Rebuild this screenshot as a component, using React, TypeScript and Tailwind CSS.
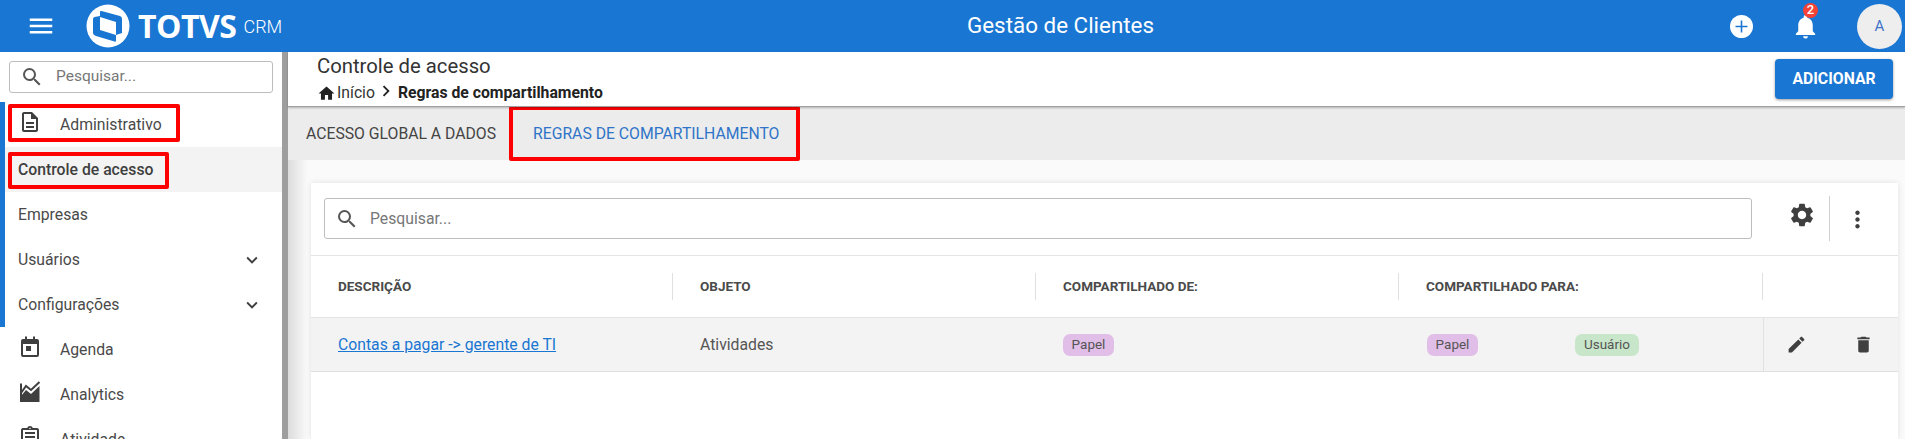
import {
  MdDelete,
  MdEdit,
  MdExpandMore,
  MdHome,
  MdMenu,
  MdMoreVert,
  MdNotifications,
  MdOutlineAssignment,
  MdOutlineDescription,
  MdSearch,
  MdSettings,
  MdChevronRight,
} from "react-icons/md";

const roboto = "font-['Roboto',sans-serif]";

/* ── Logo ─────────────────────────────────────────────────────── */

function TotvsMark() {
  return (
    <svg width="44" height="44" viewBox="0 0 44 44" className="shrink-0">
      <circle cx="22" cy="22" r="21.5" fill="#fff" />
      <path d="M14 13V8Q14 6.5 15.5 7L34 12Q36 12.600 36 15V29L30 31V18Z" fill="#1976d2" />
      <path d="M7 15Q7 13.500 8.500 13L14 12V26L30 31V36.500Q30 38 28.500 37.600L10 32Q7 31 7 29Z" fill="#1976d2" />
    </svg>
  );
}

/* ── Sidebar icons not in the icon set ───────────────────────── */

function AgendaIcon() {
  return (
    <svg width="24" height="24" viewBox="0 0 24 24" fill="currentColor">
      <path d="M7 1.500h2V4h6V1.500h2V4h2a2 2 0 0 1 2 2v14a2 2 0 0 1-2 2H5a2 2 0 0 1-2-2V6a2 2 0 0 1 2-2h2zM5 9v11h14V9z" />
      <rect x="8" y="11" width="5" height="5" />
    </svg>
  );
}

function AnalyticsIcon() {
  return (
    <svg width="24" height="24" viewBox="0 0 24 24" fill="currentColor">
      <path d="M3 22V16l5-6 5 4 8.500-8V22z" />
      <path d="M3 3.500V22M3 13l5-7 5 4 8.500-8" fill="none" stroke="currentColor" strokeWidth="2" />
    </svg>
  );
}

/* ── Sidebar ──────────────────────────────────────────────────── */

function SideIconRow({ icon, label }: { icon: React.ReactNode; label: string }) {
  return (
    <div className="flex h-[45px] items-center pl-[13px] text-[15.750px] text-[#4a4a4a]">
      <span className="flex w-[42px] -translate-y-[3px] text-[#3f3f3f]">{icon}</span>
      {label}
    </div>
  );
}

function SideTextRow({ label, active, caret }: { label: string; active?: boolean; caret?: boolean }) {
  return (
    <div
      className={
        active
          ? "flex h-[45px] items-center bg-[#f3f3f3] pl-[13px] text-[15.750px] font-medium text-[#3f3f3f]"
          : "flex h-[45px] items-center justify-between pl-[13px] pr-[19px] text-[15.750px] text-[#4a4a4a]"
      }
    >
      {label}
      {caret && <MdExpandMore size={22} className="text-[#3f3f3f]" />}
    </div>
  );
}

function Sidebar() {
  return (
    <aside className="w-[282px] shrink-0 bg-white">
      <div className="px-[9px] pt-[9px]">
        <div className="flex h-[32px] items-center rounded-[3px] border border-[#bdbdbd] pl-[10px] text-[15.500px] text-[#777]">
          <MdSearch size={24} className="mr-[12px] text-[#555]" />
          Pesquisar...
        </div>
      </div>
      <div className="mt-[9px] border-l-[5px] border-[#1976d2]">
        <SideIconRow icon={<MdOutlineDescription size={24} />} label="Administrativo" />
        <SideTextRow label="Controle de acesso" active />
        <SideTextRow label="Empresas" />
        <SideTextRow label="Usuários" caret />
        <SideTextRow label="Configurações" caret />
      </div>
      <div className="pl-[5px]">
        <SideIconRow icon={<AgendaIcon />} label="Agenda" />
        <SideIconRow icon={<AnalyticsIcon />} label="Analytics" />
        <SideIconRow icon={<MdOutlineAssignment size={24} />} label="Atividade" />
      </div>
    </aside>
  );
}

/* ── Table ────────────────────────────────────────────────────── */

const columns = "grid grid-cols-[362px_363px_363px_364px_1fr]";
const headers = ["DESCRIÇÃO", "OBJETO", "COMPARTILHADO DE:", "COMPARTILHADO PARA:", ""];

function Pill({ label, tone }: { label: string; tone: "purple" | "green" }) {
  return (
    <span
      className={
        tone === "purple"
          ? "flex h-[22px] w-[51px] items-center justify-center rounded-[7px] bg-[#e1bee7] text-[13.500px] text-[#555]"
          : "flex h-[22px] w-[64px] items-center justify-center rounded-[7px] bg-[#c8e6c9] text-[13.500px] text-[#555]"
      }
    >
      {label}
    </span>
  );
}

function RulesTable() {
  return (
    <div>
      <div className={`${columns} h-[63px] items-center border-y border-[#e4e4e4]`}>
        {headers.map((h, i) => (
          <div
            key={i}
            className={
              i < 4
                ? "flex h-[27px] items-center border-r border-[#e0e0e0] pl-[27px] text-[13.500px] font-bold text-[#4a4a4a]"
                : "h-[27px]"
            }
          >
            {h}
          </div>
        ))}
      </div>
      <div className={`${columns} h-[54px] items-center border-b border-[#e0e0e0] bg-[#f3f3f3] text-[15.750px] text-[#555]`}>
        <a className="pl-[27px] text-[#1976d2] underline">Contas a pagar -&gt; gerente de TI</a>
        <div className="pl-[27px]">Atividades</div>
        <div className="pl-[27px]">
          <Pill label="Papel" tone="purple" />
        </div>
        <div className="flex gap-[97px] pl-[28px]">
          <Pill label="Papel" tone="purple" />
          <Pill label="Usuário" tone="green" />
        </div>
        <div className="flex h-full items-center border-l border-[#e0e0e0] pl-[22px] text-[#3f3f3f]">
          <MdEdit size={21} />
          <MdDelete size={21} className="ml-[46px]" />
        </div>
      </div>
    </div>
  );
}

/* ── Page ─────────────────────────────────────────────────────── */

export default function App() {
  return (
    <div className={`relative flex h-[439px] w-full flex-col overflow-hidden bg-white ${roboto}`}>
      {/* Top bar */}
      <header className="relative flex h-[52px] shrink-0 items-center bg-[#1976d2] text-white">
        <MdMenu size={30} className="ml-[26px]" />
        <div className="ml-[30px]">
          <TotvsMark />
        </div>
        <span className="ml-[8px] font-['Open_Sans',sans-serif] text-[32px] font-bold tracking-[-0.5px]">TOTVS</span>
        <span className="ml-[7px] text-[18px] font-light">CRM</span>
        <span className="absolute left-[967px] text-[22.400px]">Gestão de Clientes</span>
        <div className="ml-auto flex items-center">
          <span className="flex size-[23px] items-center justify-center rounded-full bg-white text-[#1976d2]">
            <svg width="13" height="13" viewBox="0 0 13 13" stroke="currentColor" strokeWidth="1.6">
              <path d="M6.500 0.500v12M0.500 6.500h12" />
            </svg>
          </span>
          <span className="relative ml-[38px] flex">
            <MdNotifications size={29} />
            <span className="absolute left-[12px] top-[-9px] flex size-[15px] items-center justify-center rounded-full bg-[#f44336] text-[13px] font-medium">
              2
            </span>
          </span>
          <span className="ml-[37px] mr-[3px] flex size-[45px] items-center justify-center rounded-full bg-[#eeeeee] text-[15px] text-[#3f74c8]">
            A
          </span>
        </div>
      </header>

      <div className="flex min-h-0 flex-1">
        <Sidebar />
        <div className="w-[6px] shrink-0 bg-[#9e9e9e]" />

        <main className="flex min-w-0 flex-1 flex-col bg-[#fafafa]">
          {/* Page title */}
          <div className="z-10 flex h-[55px] shrink-0 justify-between border-b border-[#a0a0a0] bg-white pl-[29px] pr-[12px] shadow-[0_1px_2px_rgba(0,0,0,0.25)]">
            <div>
              <div className="text-[20.300px] leading-[28px] text-[#333]">Controle de acesso</div>
              <div className="mt-[2px] flex items-center text-[15.750px] leading-[20px] text-[#333]">
                <MdHome size={19} className="text-[#222]" />
                <span className="ml-[1px]">Início</span>
                <MdChevronRight size={22} className="mr-[1px] -translate-y-[2px] text-[#222]" />
                <span className="font-bold text-[#222]">Regras de compartilhamento</span>
              </div>
            </div>
            <button className="mt-[7px] flex h-[40px] w-[118px] items-center justify-center rounded-[4px] bg-[#1976d2] text-[15.750px] font-bold text-white shadow-[0_1px_3px_rgba(0,0,0,0.4)]">
              ADICIONAR
            </button>
          </div>

          {/* Tabs */}
          <div className="flex h-[53px] shrink-0 items-center bg-[#ececec] text-[15.750px]">
            <span className="ml-[18px] text-[#444]">ACESSO GLOBAL A DADOS</span>
            <span className="ml-[37px] text-[#2f74c8]">REGRAS DE COMPARTILHAMENTO</span>
          </div>

          {/* Content */}
          <div className="flex-1 bg-gradient-to-r from-[#dcdcdc] from-0% to-[#fafafa] to-[1.2%] pl-[23px] pr-[7px] pt-[23px]">
            <div className="h-full bg-white shadow-[0_0_6px_rgba(0,0,0,0.1)]">
              <div className="flex h-[72px] items-start">
                <div className="ml-[13px] mt-[15px] flex h-[41px] w-[1428px] items-center rounded-[3px] border border-[#bdbdbd] pl-[10px] text-[15.750px] text-[#777]">
                  <MdSearch size={24} className="mr-[11px] text-[#555]" />
                  Pesquisar...
                </div>
                <MdSettings size={28} className="ml-[36px] mt-[18px] text-[#3f3f3f]" />
                <div className="ml-[13px] mt-[13px] h-[45px] w-px bg-[#d0d0d0]" />
                <MdMoreVert size={27} className="ml-[14px] mt-[23px] text-[#3f3f3f]" />
              </div>
              <RulesTable />
            </div>
          </div>
        </main>
      </div>

      {/* Red annotation boxes */}
      <div className="absolute left-[8px] top-[104px] h-[38px] w-[172px] rounded-[2px] border-4 border-[#ff0000]" />
      <div className="absolute left-[8px] top-[152px] h-[37px] w-[161px] rounded-[2px] border-4 border-[#ff0000]" />
      <div className="absolute left-[509px] top-[106px] h-[55px] w-[291px] rounded-[2px] border-4 border-[#ff0000]" />
    </div>
  );
}
